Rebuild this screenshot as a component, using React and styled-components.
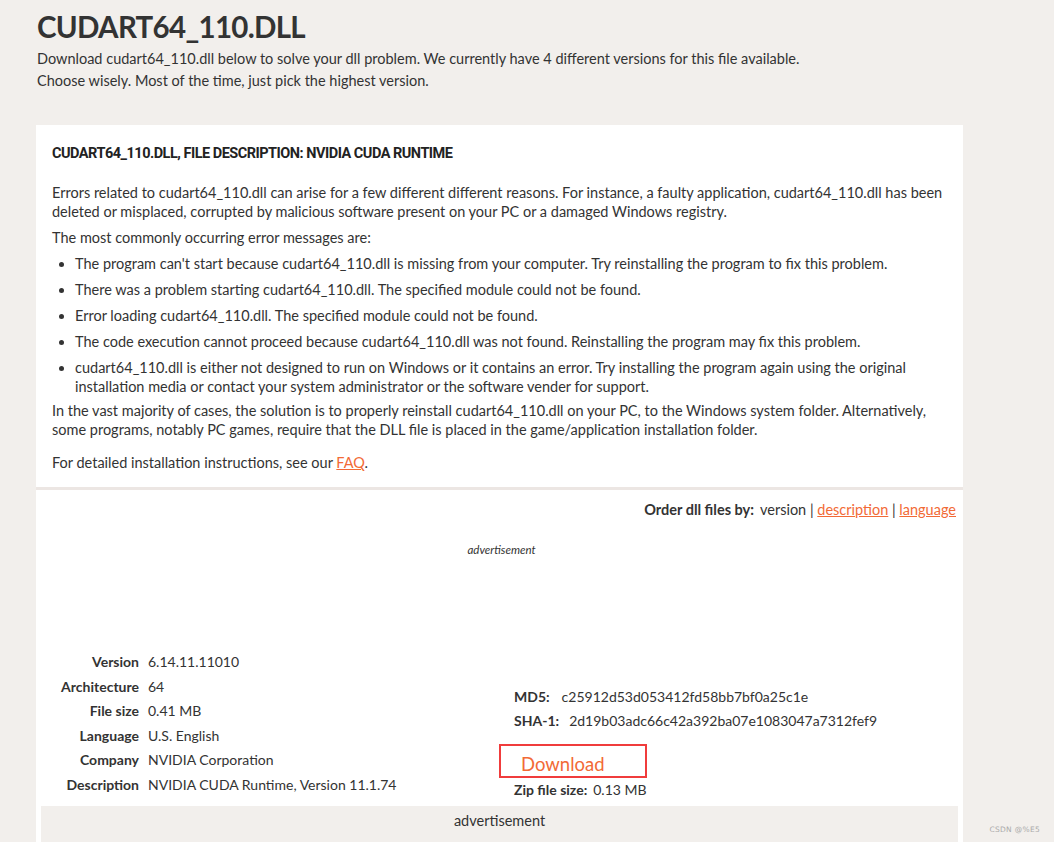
import React from "react";
import styled, { createGlobalStyle } from "styled-components";

const GlobalStyle = createGlobalStyle`
  html, body {
    margin: 0;
    padding: 0;
    background: #f2efec;
  }
  body {
    font-family: Lato, "Open Sans", sans-serif;
    color: #333;
  }
`;

const Page = styled.div`
  width: 1054px;
  height: 842px;
  overflow: hidden;
  position: relative;
  padding: 0 91px 0 36px;
  box-sizing: border-box;
`;

const Title = styled.h1`
  margin: 0;
  padding: 9px 0 0 1px;
  font-size: 29.5px;
  letter-spacing: -0.7px;
  line-height: 36px;
  font-weight: 700;
  color: #333;
`;

const Intro = styled.p`
  margin: 0;
  padding: 3px 0 0 1px;
  font-size: 14.5px;
  line-height: 22px;
`;

const Card = styled.section`
  background: #fff;
  margin-top: 33px;
  padding: 20px 16px 8px 16px;
  border-bottom: 3px solid #ece6e3;
  font-size: 14.5px;
  line-height: 19px;
`;

const CardTitle = styled.h2`
  margin: 0 0 20px;
  font-family: "Liberation Sans Narrow", Roboto, sans-serif;
  font-size: 14.5px;
  letter-spacing: -0.5px;
  font-weight: 700;
  line-height: 18px;
  color: #222;
`;

const Para = styled.p`
  margin: 0 0 ${p => p.$gap || 7}px;
`;

const List = styled.ul`
  margin: 0 0 5px;
  padding-left: 23px;
  li {
    margin-bottom: 7px;
  }
  li:last-child {
    margin-bottom: 0;
  }
`;

const Link = styled.a`
  color: #f26a36;
  text-decoration: underline;
`;

const Panel = styled.section`
  background: #fff;
  padding: 10px 5px 0 5px;
  height: 360px;
  box-sizing: border-box;
  font-size: 14.5px;
`;

const OrderBar = styled.div`
  text-align: right;
  line-height: 20px;
  padding-right: 2px;
  b {
    margin-right: 6px;
  }
`;

const AdLabel = styled.div`
  text-align: center;
  font-style: italic;
  font-size: 11.5px;
  line-height: 14px;
  margin-top: 23px;
  height: 109px;
  padding-left: 4px;
  color: #333;
`;

const Details = styled.div`
  display: flex;
  align-items: flex-start;
`;

const InfoTable = styled.div`
  display: grid;
  grid-template-columns: 98px auto;
  column-gap: 9px;
  row-gap: 5px;
  width: 466px;
  line-height: 19.6px;
  font-size: 14px;
`;

const InfoLabel = styled.div`
  text-align: right;
  font-weight: 700;
`;

const Hashes = styled.div`
  display: flex;
  flex-direction: column;
  margin-top: 33px;
  font-size: 14px;
`;

const HashRow = styled.div`
  padding-left: 7px;
  line-height: 24px;
  b {
    display: inline-block;
    margin-right: ${p => p.$gap}px;
  }
`;

const DownloadBox = styled.div`
  margin: 11px 0 0 -8px;
  width: 148px;
  height: 34px;
  box-sizing: border-box;
  border: 2px solid #f03c3c;
  padding: 7px 0 0 20px;
  font-size: 18.5px;
  line-height: 22px;
  color: #f26a36;
`;

const ZipRow = styled.div`
  padding-left: 7px;
  margin-top: 2px;
  line-height: 20px;
  b {
    margin-right: 6px;
  }
`;

const AdBar = styled.div`
  margin-top: 6px;
  background: #f2efec;
  height: 40px;
  text-align: center;
  padding-top: 6px;
  box-sizing: border-box;
  font-size: 14.5px;
`;

const Watermark = styled.div`
  position: absolute;
  right: 14px;
  bottom: 8px;
  font-family: "DejaVu Sans", sans-serif;
  font-size: 7.5px;
  color: #aaa;
  letter-spacing: 0.3px;
`;

const info = [
  ["Version", "6.14.11.11010"],
  ["Architecture", "64"],
  ["File size", "0.41 MB"],
  ["Language", "U.S. English"],
  ["Company", "NVIDIA Corporation"],
  ["Description", "NVIDIA CUDA Runtime, Version 11.1.74"],
];

const errors = [
  "The program can't start because cudart64_110.dll is missing from your computer. Try reinstalling the program to fix this problem.",
  "There was a problem starting cudart64_110.dll. The specified module could not be found.",
  "Error loading cudart64_110.dll. The specified module could not be found.",
  "The code execution cannot proceed because cudart64_110.dll was not found. Reinstalling the program may fix this problem.",
  "cudart64_110.dll is either not designed to run on Windows or it contains an error. Try installing the program again using the original installation media or contact your system administrator or the software vender for support.",
];

export default function App() {
  return (
    <Page>
      <GlobalStyle />
      <Title>CUDART64_110.DLL</Title>
      <Intro>
        Download cudart64_110.dll below to solve your dll problem. We currently have 4 different versions for this file available.
        <br />
        Choose wisely. Most of the time, just pick the highest version.
      </Intro>

      <Card>
        <CardTitle>CUDART64_110.DLL, FILE DESCRIPTION: NVIDIA CUDA RUNTIME</CardTitle>
        <Para>
          Errors related to cudart64_110.dll can arise for a few different different reasons. For instance, a faulty application, cudart64_110.dll has been deleted or misplaced, corrupted by malicious software present on your PC or a damaged Windows registry.
        </Para>
        <Para>The most commonly occurring error messages are:</Para>
        <List>
          {errors.map(e => (
            <li key={e}>{e}</li>
          ))}
        </List>
        <Para $gap={14}>
          In the vast majority of cases, the solution is to properly reinstall cudart64_110.dll on your PC, to the Windows system folder. Alternatively, some programs, notably PC games, require that the DLL file is placed in the game/application installation folder.
        </Para>
        <Para $gap={0}>
          For detailed installation instructions, see our <Link>FAQ</Link>.
        </Para>
      </Card>

      <Panel>
        <OrderBar>
          <b>Order dll files by:</b>version | <Link>description</Link> | <Link>language</Link>
        </OrderBar>
        <AdLabel>advertisement</AdLabel>
        <Details>
          <InfoTable>
            {info.map(([k, v]) => (
              <React.Fragment key={k}>
                <InfoLabel>{k}</InfoLabel>
                <div>{v}</div>
              </React.Fragment>
            ))}
          </InfoTable>
          <Hashes>
            <HashRow $gap={12}>
              <b>MD5:</b>c25912d53d053412fd58bb7bf0a25c1e
            </HashRow>
            <HashRow $gap={10}>
              <b>SHA-1:</b>2d19b03adc66c42a392ba07e1083047a7312fef9
            </HashRow>
            <DownloadBox>Download</DownloadBox>
            <ZipRow>
              <b>Zip file size:</b>0.13 MB
            </ZipRow>
          </Hashes>
        </Details>
        <AdBar>advertisement</AdBar>
      </Panel>
      <Watermark>CSDN @%E5</Watermark>
    </Page>
  );
}
